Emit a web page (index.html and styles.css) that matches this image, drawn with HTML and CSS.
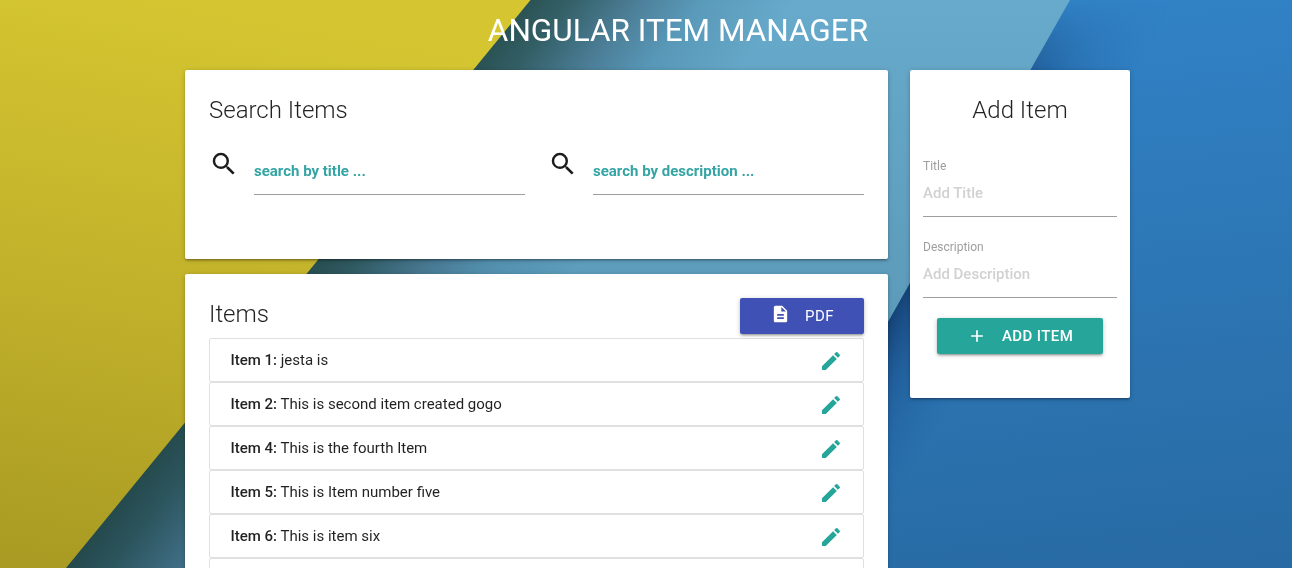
FILE: index.html
```
<!DOCTYPE html>
<html lang="en">
<head>
<meta charset="utf-8">
<title>Angular Item Manager</title>
<link rel="stylesheet" href="styles.css">
</head>
<body>
<svg class="backdrop" viewBox="0 0 1292 568" preserveAspectRatio="none" aria-hidden="true">
  <defs>
    <linearGradient id="yellow" gradientUnits="userSpaceOnUse" x1="230" y1="0" x2="130" y2="580">
      <stop offset="0" stop-color="#d5c631"/><stop offset=".5" stop-color="#c2b22b"/><stop offset="1" stop-color="#a99b23"/>
    </linearGradient>
    <linearGradient id="sky" gradientUnits="userSpaceOnUse" x1="530" y1="0" x2="690" y2="131">
      <stop offset="0" stop-color="#2b5354"/><stop offset=".15" stop-color="#335f66"/><stop offset=".42" stop-color="#4d809a"/><stop offset=".65" stop-color="#5a9aba"/><stop offset="1" stop-color="#67aacb"/>
    </linearGradient>
    <linearGradient id="ocean" gradientUnits="userSpaceOnUse" x1="1100" y1="0" x2="1160" y2="568">
      <stop offset="0" stop-color="#3182c6"/><stop offset=".45" stop-color="#2d77b6"/><stop offset="1" stop-color="#286ba4"/>
    </linearGradient>
    <linearGradient id="crease" gradientUnits="userSpaceOnUse" x1="888" y1="321" x2="970" y2="367">
      <stop offset="0" stop-color="#123a6c" stop-opacity=".85"/><stop offset=".4" stop-color="#174a86" stop-opacity=".45"/><stop offset="1" stop-color="#2164a6" stop-opacity="0"/>
    </linearGradient>
    <linearGradient id="fade" x1="0" y1="0" x2="0" y2="1">
      <stop offset="0" stop-color="#000"/><stop offset=".12" stop-color="#888"/><stop offset=".5" stop-color="#fff"/><stop offset="1" stop-color="#fff"/>
    </linearGradient>
    <linearGradient id="dusk" x1="0" y1="0" x2="0" y2="1">
      <stop offset="0" stop-color="#06202c" stop-opacity="0"/><stop offset="1" stop-color="#06202c" stop-opacity=".2"/>
    </linearGradient>
    <mask id="soft"><rect width="1292" height="568" fill="url(#fade)"/></mask>
  </defs>
  <rect width="1292" height="568" fill="url(#sky)"/>
  <rect width="1292" height="568" fill="url(#dusk)"/>
  <path d="M0 0H530.500L66 568H0Z" fill="url(#yellow)"/>
  <path d="M1070 0H1292V568H749Z" fill="url(#ocean)"/>
  <path d="M1070 0H1292V568H749Z" fill="url(#crease)" mask="url(#soft)"/>
</svg>
<main class="page">
  <h1 class="page-title">ANGULAR ITEM MANAGER</h1>
  <div class="columns">
    <div class="main-column">
      <section class="card search-card">
        <h2 class="card-title">Search Items</h2>
        <div class="search-row">
          <label class="search-field">
            <svg class="search-icon" viewBox="0 0 24 24"><path d="M15.500 14h-.79l-.28-.27A6.471 6.471 0 0 0 16 9.500 6.500 6.500 0 1 0 9.500 16c1.610 0 3.090-.59 4.230-1.570l.27.28v.79l5 4.990L20.490 19l-4.990-5zm-6 0C7.010 14 5 11.990 5 9.500S7.010 5 9.500 5 14 7.010 14 9.500 11.990 14 9.500 14z"/></svg>
            <input class="search-input" type="text" placeholder="search by title ...">
          </label>
          <label class="search-field">
            <svg class="search-icon" viewBox="0 0 24 24"><path d="M15.500 14h-.79l-.28-.27A6.471 6.471 0 0 0 16 9.500 6.500 6.500 0 1 0 9.500 16c1.610 0 3.090-.59 4.230-1.570l.27.28v.79l5 4.990L20.490 19l-4.990-5zm-6 0C7.010 14 5 11.990 5 9.500S7.010 5 9.500 5 14 7.010 14 9.500 11.990 14 9.500 14z"/></svg>
            <input class="search-input" type="text" placeholder="search by description ...">
          </label>
        </div>
      </section>
      <section class="card items-card">
        <div class="items-head">
          <h2 class="card-title">Items</h2>
          <button class="btn btn-pdf"><svg class="pdf-icon" viewBox="0 0 24 24"><path d="M14 2H6c-1.100 0-1.990.9-1.990 2L4 20c0 1.100.89 2 1.990 2H18c1.100 0 2-.9 2-2V8l-6-6zm2 16H8v-2h8v2zm0-4H8v-2h8v2zm-3-5V3.500L18.500 9H13z"/></svg>PDF</button>
        </div>
        <ul class="items">
          <li class="item"><span><strong>Item 1:</strong> jesta is</span><svg class="edit-icon" viewBox="0 0 24 24"><use href="#pencil"/></svg></li>
          <li class="item"><span><strong>Item 2:</strong> This is second item created gogo</span><svg class="edit-icon" viewBox="0 0 24 24"><use href="#pencil"/></svg></li>
          <li class="item"><span><strong>Item 4:</strong> This is the fourth Item</span><svg class="edit-icon" viewBox="0 0 24 24"><use href="#pencil"/></svg></li>
          <li class="item"><span><strong>Item 5:</strong> This is Item number five</span><svg class="edit-icon" viewBox="0 0 24 24"><use href="#pencil"/></svg></li>
          <li class="item"><span><strong>Item 6:</strong> This is item six</span><svg class="edit-icon" viewBox="0 0 24 24"><use href="#pencil"/></svg></li>
          <li class="item"></li>
        </ul>
      </section>
    </div>
    <aside class="card add-card">
      <h2 class="card-title add-title">Add Item</h2>
      <label class="field"><span class="field-label">Title</span><input class="field-input" type="text" placeholder="Add Title"></label>
      <label class="field"><span class="field-label">Description</span><input class="field-input" type="text" placeholder="Add Description"></label>
      <button class="btn btn-add"><svg class="plus-icon" viewBox="0 0 24 24"><path d="M19 13h-6v6h-2v-6H5v-2h6V5h2v6h6v2z"/></svg>ADD ITEM</button>
    </aside>
  </div>
</main>
<svg class="sprite" aria-hidden="true"><symbol id="pencil" viewBox="0 0 24 24"><path d="M3 17.250V21h3.750L17.810 9.940l-3.750-3.750L3 17.250zM20.710 7.040a.996.996 0 0 0 0-1.410l-2.340-2.340a.996.996 0 0 0-1.410 0l-1.830 1.830 3.750 3.750 1.830-1.830z"/></symbol></svg>
</body>
</html>
```
FILE: styles.css
```
* { box-sizing: border-box; }
html { height: 100%; overflow: hidden; }
body {
  margin: 0;
  height: 100%;
  overflow: hidden;
  font-family: Roboto, "Liberation Sans", sans-serif;
  font-size: 15px;
  line-height: 1.5;
  color: rgba(0, 0, 0, .87);
}
.backdrop { position: fixed; inset: 0; z-index: -1; width: 100%; height: 100%; }
.sprite { display: none; }
.page { width: 945px; margin-left: 185px; }
.page-title {
  margin: 0;
  height: 70px;
  padding: 12px 0 0 41px;
  font-size: 31.5px;
  line-height: 38px;
  font-weight: 400;
  color: #fff;
  text-align: center;
}
.columns { display: grid; grid-template-columns: 703px 220px; gap: 22px; align-items: start; }
.main-column { display: flex; flex-direction: column; gap: 15px; }
.card {
  background: #fff;
  border-radius: 2px;
  box-shadow: 0 2px 2px 0 rgba(0, 0, 0, .14), 0 3px 1px -2px rgba(0, 0, 0, .12), 0 1px 5px 0 rgba(0, 0, 0, .2);
}
.card-title { margin: 0; font-size: 24px; line-height: 32px; font-weight: 300; }
.search-card { height: 189px; padding: 24px; }
.search-row { display: flex; gap: 23px; margin-top: 23px; }
.search-field { flex: 1; display: flex; gap: 15px; }
.search-icon { flex: none; width: 30px; height: 30px; fill: #1c1c1c; }
.search-input {
  width: 0;
  flex: 1;
  height: 46px;
  padding: 0 0 2px;
  border: 0;
  border-bottom: 1px solid #9e9e9e;
  font: 700 15px Roboto, sans-serif;
  outline: none;
}
.search-input::placeholder { color: #35a4a4; opacity: 1; }
.items-card { height: 294px; padding: 24px 24px 0; overflow: hidden; border-radius: 2px 2px 0 0; }
.items-head { display: flex; justify-content: space-between; height: 40px; }
.items { list-style: none; margin: 0; padding: 0; }
.item {
  display: flex;
  align-items: center;
  justify-content: space-between;
  height: 44px;
  padding: 0 20px 0 20.5px;
  border: 1px solid #e0e0e0;
  border-radius: 2px;
}
.item strong { font-weight: 500; }
.edit-icon { width: 24px; height: 24px; fill: #26a69a; margin-top: 2px; }
.btn {
  display: flex;
  align-items: center;
  height: 36px;
  padding: 0 0 0 30px;
  border: 0;
  border-radius: 2px;
  color: #fff;
  font: 400 15px/36px Roboto, sans-serif;
  letter-spacing: .5px;
  white-space: nowrap;
  box-shadow: 0 2px 2px 0 rgba(0, 0, 0, .14), 0 3px 1px -2px rgba(0, 0, 0, .12), 0 1px 5px 0 rgba(0, 0, 0, .2);
}
.btn svg { flex: none; width: 20px; height: 20px; margin-right: 15px; fill: #fff; }
.btn-pdf { width: 124px; background: #3f51b5; }
.btn-pdf .pdf-icon { width: 21px; margin-right: 14px; margin-top: -4px; }
.btn-add { width: 166px; margin: 20px auto 0; background: #26a69a; font-weight: 500; letter-spacing: .4px; }
.add-card { height: 328px; padding: 24px 13px; }
.add-title { text-align: center; margin-bottom: 31px; }
.field { display: flex; flex-direction: column; height: 60px; margin-bottom: 21px; }
.field + .field { margin-bottom: 0; }
.field-label { font-size: 12px; line-height: 18px; color: #9e9e9e; }
.field-input {
  height: 42px;
  padding: 0 0 6px;
  border: 0;
  border-bottom: 1px solid #9e9e9e;
  font: 500 15px Roboto, sans-serif;
  outline: none;
}
.field-input::placeholder { color: #d1d1d1; opacity: 1; }
```
